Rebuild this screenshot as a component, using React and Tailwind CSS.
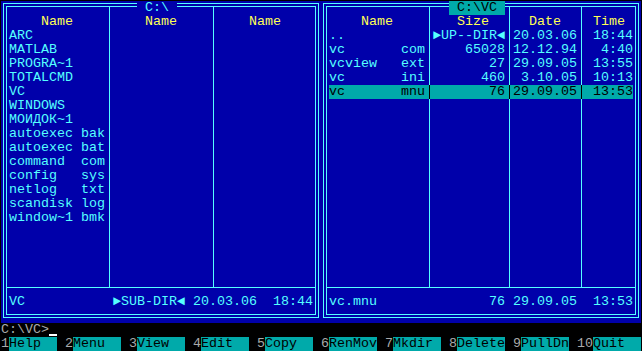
import React from 'react';

const leftFiles = [
  'ARC',
  'MATLAB',
  'PROGRA~1',
  'TOTALCMD',
  'VC',
  'WINDOWS',
  'МОИДОК~1',
  'autoexec bak',
  'autoexec bat',
  'command  com',
  'config   sys',
  'netlog   txt',
  'scandisk log',
  'window~1 bmk',
];

const rightFiles = [
  { name: '..', size: '►UP--DIR◄', date: '20.03.06', time: '18:44' },
  { name: 'vc       com', size: '65028', date: '12.12.94', time: '4:40' },
  { name: 'vcview   ext', size: '27', date: '29.09.05', time: '13:55' },
  { name: 'vc       ini', size: '460', date: '3.10.05', time: '10:13' },
  { name: 'vc       mnu', size: '76', date: '29.09.05', time: '13:53', sel: true },
];

const keys = [
  ['1', 'Help  '],
  ['2', 'Menu  '],
  ['3', 'View  '],
  ['4', 'Edit  '],
  ['5', 'Copy  '],
  ['6', 'RenMov'],
  ['7', 'Mkdir '],
  ['8', 'Delete'],
  ['9', 'PullDn'],
  ['10', 'Quit  '],
];

const ROWS = 18;

function Divider({ sel }) {
  return (
    <div className="w-[8px] shrink-0 pl-[4px]">
      <div className={sel ? 'w-px h-full bg-black' : 'w-px h-full bg-[#55FFFF]'} />
    </div>
  );
}

function Frame({ title, active, titleLeft, status, children }) {
  return (
    <div className="relative w-[320px] h-[322px] bg-[#0000AA] pt-[2px] px-[2px] pb-[5px]">
      <div className="h-full border border-[#55FFFF] p-[2px]">
        <div className="h-full border border-[#55FFFF] flex flex-col">
          <div className="px-[2px] flex flex-col">{children}</div>
          <div className="h-px bg-[#55FFFF]" />
          <div className="h-[7px]" />
          <div className="px-[2px] h-[14px] whitespace-pre text-[#55FFFF]">{status}</div>
        </div>
      </div>
      {/* panel title sits over the top border */}
      <div
        className={
          active
            ? 'absolute top-0 h-[14px] whitespace-pre bg-[#00AAAA] text-black'
            : 'absolute top-0 h-[14px] whitespace-pre bg-[#0000AA] text-[#55FFFF]'
        }
        style={{ left: titleLeft }}
      >
        {title}
      </div>
    </div>
  );
}

function LeftPanel() {
  const rows = Array.from({ length: ROWS }, (_, i) => leftFiles[i] || '');
  return (
    <Frame
      title=" C:\ "
      titleLeft={136}
      status={'VC'.padEnd(13) + '►SUB-DIR◄ 20.03.06  18:44'}
    >
      <div className="flex h-[8px]">
        <div className="w-[96px] shrink-0" />
        <Divider />
        <div className="w-[96px] shrink-0" />
        <Divider />
        <div className="w-[96px] shrink-0" />
      </div>
      <div className="flex h-[14px] text-[#FFFF55] whitespace-pre">
        <div className="w-[96px] shrink-0">{'    Name'}</div>
        <Divider />
        <div className="w-[96px] shrink-0">{'    Name'}</div>
        <Divider />
        <div className="w-[96px] shrink-0">{'    Name'}</div>
      </div>
      {rows.map((f, i) => (
        <div key={i} className="flex h-[14px] text-[#55FFFF] whitespace-pre">
          <div className="w-[96px] shrink-0">{f}</div>
          <Divider />
          <div className="w-[96px] shrink-0" />
          <Divider />
          <div className="w-[96px] shrink-0" />
        </div>
      ))}
      <div className="flex h-[6px]">
        <div className="w-[96px] shrink-0" />
        <Divider />
        <div className="w-[96px] shrink-0" />
        <Divider />
        <div className="w-[96px] shrink-0" />
      </div>
    </Frame>
  );
}

function RightPanel() {
  const rows = Array.from({ length: ROWS }, (_, i) => rightFiles[i] || null);
  return (
    <Frame
      title=" C:\VC "
      active
      titleLeft={128}
      status={'vc.mnu'.padEnd(20) + '76 29.09.05  13:53'}
    >
      <div className="flex h-[8px]">
        <div className="w-[96px] shrink-0" />
        <Divider />
        <div className="w-[72px] shrink-0" />
        <Divider />
        <div className="w-[64px] shrink-0" />
        <Divider />
        <div className="w-[48px] shrink-0" />
      </div>
      <div className="flex h-[14px] text-[#FFFF55] whitespace-pre">
        <div className="w-[96px] shrink-0">{'    Name'}</div>
        <Divider />
        <div className="w-[72px] shrink-0">{'   Size'}</div>
        <Divider />
        <div className="w-[64px] shrink-0">{'  Date'}</div>
        <Divider />
        <div className="w-[48px] shrink-0">{' Time'}</div>
      </div>
      {rows.map((f, i) => (
        <div
          key={i}
          className={
            f && f.sel
              ? 'flex h-[14px] whitespace-pre bg-[#00AAAA] text-black'
              : 'flex h-[14px] whitespace-pre text-[#55FFFF]'
          }
        >
          <div className="w-[96px] shrink-0">{f ? f.name : ''}</div>
          <Divider sel={f && f.sel} />
          <div className="w-[72px] shrink-0">{f ? f.size.padStart(9) : ''}</div>
          <Divider sel={f && f.sel} />
          <div className="w-[64px] shrink-0">{f ? f.date.padStart(8) : ''}</div>
          <Divider sel={f && f.sel} />
          <div className="w-[48px] shrink-0">{f ? f.time.padStart(6) : ''}</div>
        </div>
      ))}
      <div className="flex h-[6px]">
        <div className="w-[96px] shrink-0" />
        <Divider />
        <div className="w-[72px] shrink-0" />
        <Divider />
        <div className="w-[64px] shrink-0" />
        <Divider />
        <div className="w-[48px] shrink-0" />
      </div>
    </Frame>
  );
}

export default function App() {
  return (
    <div className="w-[642px] h-[351px] bg-black pt-px pl-px font-['Liberation_Mono',monospace] text-[13.33px] leading-[14px]">
      <div className="flex h-[322px]">
        <LeftPanel />
        <RightPanel />
      </div>

      {/* command line */}
      <div className="flex h-[14px] text-[#AAAAAA] whitespace-pre">
        <span>{'C:\\VC>'}</span>
        <div className="w-[8px] h-[14px] flex flex-col justify-end pb-px">
          <div className="h-[2px] bg-white" />
        </div>
      </div>

      {/* function key bar */}
      <div className="flex h-[14px] whitespace-pre">
        {keys.map(([n, label], i) => (
          <React.Fragment key={n}>
            <span className="text-[#AAAAAA]">{n}</span>
            <span className="bg-[#00AAAA] text-black">{label}</span>
            {i < keys.length - 1 && <span className="text-[#AAAAAA]"> </span>}
          </React.Fragment>
        ))}
      </div>
    </div>
  );
}
